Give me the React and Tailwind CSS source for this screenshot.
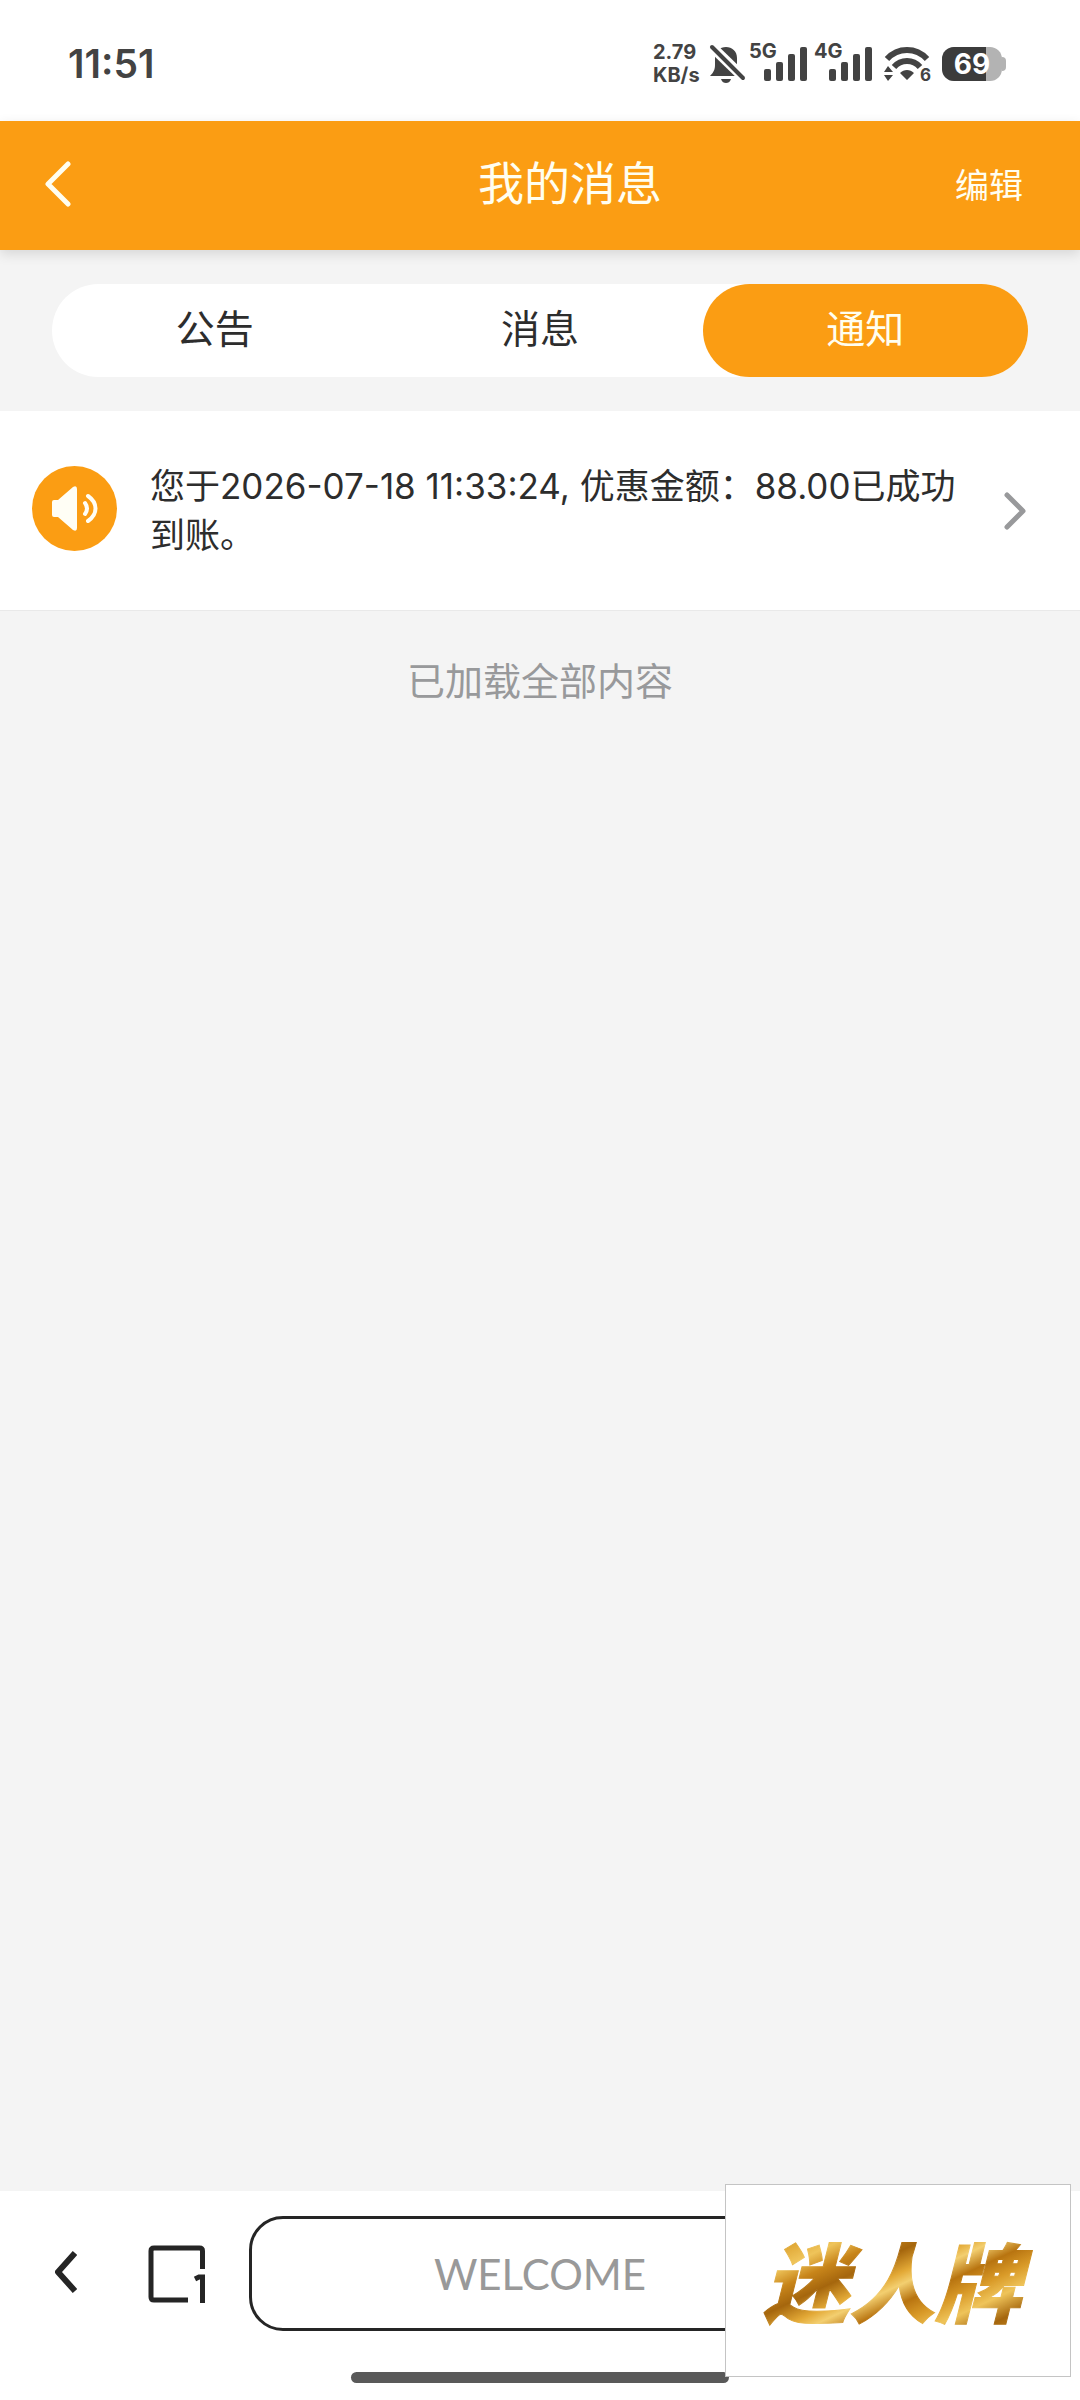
function SignalBars() {
  return (
    <svg width="43" height="34" viewBox="0 0 43 34" fill="currentColor" aria-hidden="true">
      <rect x="0" y="22" width="7" height="12" rx="2" />
      <rect x="12" y="15" width="7" height="19" rx="2" />
      <rect x="24" y="7" width="7" height="27" rx="2" />
      <rect x="36" y="0" width="7" height="34" rx="2" />
    </svg>
  );
}

function Signal({ label }) {
  return (
    <div className="relative flex w-[58px] justify-end">
      <span className="absolute -top-1 left-0 text-[20px] leading-[16px] font-bold">{label}</span>
      <SignalBars />
    </div>
  );
}

function MutedBell() {
  return (
    <svg width="37" height="40" viewBox="0 0 37 40" aria-hidden="true">
      <path fill="currentColor" d="M17 3c6 0 11 4 11 11v9l4 7v2H1c4-4 5-7 5-11v-7C6 7 11 3 17 3Z" />
      <path fill="currentColor" d="M12 35h10c-1 3-3 4-5 4s-4-1-5-4Z" />
      <path d="M0 0 37 36" stroke="#fff" strokeWidth="10" />
      <path d="M3 3 34 34" stroke="currentColor" strokeWidth="4" strokeLinecap="round" />
    </svg>
  );
}

function Wifi() {
  return (
    <div className="relative">
      <svg width="46" height="34" viewBox="0 0 46 34" aria-hidden="true">
        <g fill="none" stroke="currentColor" strokeWidth="6">
          <path d="M3 12C14 0 32 0 43 12" />
          <path d="M10 20c7-8 19-8 26 0" />
        </g>
        <path fill="currentColor" d="M16 26c4-4 10-4 14 0l-7 7ZM0 25l4-6 5 6ZM0 28h9l-5 6Z" />
      </svg>
      <span className="absolute -right-px -bottom-px text-[17px] leading-[14px] font-bold">6</span>
    </div>
  );
}

function Battery() {
  return (
    <div className="flex items-center">
      <div className="relative flex h-[34px] w-[60px] items-center justify-center overflow-hidden rounded-[12px] bg-[#b3b3b3] text-white">
        <div className="absolute inset-y-0 left-0 w-[44px] bg-[#3c3c3c]" />
        <span className="relative text-[28px] leading-none font-bold">69</span>
      </div>
      <div className="h-[14px] w-1 rounded-r bg-[#b3b3b3]" />
    </div>
  );
}

function StatusBar() {
  return (
    <div className="flex h-[121px] items-center justify-between bg-white pt-[7px] pr-[74px] pl-[68px] font-[Inter,sans-serif] text-[#434343]">
      <span className="text-[39px] font-semibold">11:51</span>
      <div className="flex items-center">
        <div className="mr-[11px] w-[45px] text-[20px] leading-[23px] font-bold">
          <div>2.79</div>
          <div>KB/s</div>
        </div>
        <MutedBell />
        <div className="ml-[3px] flex gap-[7px]">
          <Signal label="5G" />
          <Signal label="4G" />
        </div>
        <div className="mx-3">
          <Wifi />
        </div>
        <Battery />
      </div>
    </div>
  );
}

function Header() {
  return (
    <header className="z-10 grid h-[129px] grid-cols-[1fr_auto_1fr] items-center bg-[#fb9d13] pr-[57px] pb-1 pl-[45px] text-[#fffef0] shadow-[0_4px_12px_rgba(0,0,0,0.12)]">
      <button aria-label="返回" className="justify-self-start">
        <svg width="26" height="46" viewBox="0 0 26 46" fill="none" stroke="currentColor" strokeWidth="5" strokeLinecap="round" strokeLinejoin="round" aria-hidden="true">
          <path d="M23 3 3 23l20 20" />
        </svg>
      </button>
      <h1 className="pb-2 pl-[72px] text-[46px] leading-none">我的消息</h1>
      <button className="justify-self-end text-[34px] leading-none">编辑</button>
    </header>
  );
}

const TABS = ["公告", "消息", "通知"];

function Tabs() {
  return (
    <nav className="px-[52px] py-[34px]">
      <div role="tablist" className="grid h-[93px] grid-cols-3 rounded-full bg-white">
        {TABS.map((tab) => (
          <button
            key={tab}
            role="tab"
            aria-selected={tab === "通知"}
            className="rounded-full pb-2 text-[39px] leading-none text-[#2d2d2d] aria-selected:bg-[#fb9d13] aria-selected:text-[#fffef0]"
          >
            {tab}
          </button>
        ))}
      </div>
    </nav>
  );
}

function SpeakerIcon() {
  return (
    <svg className="mb-1 shrink-0" width="85" height="85" viewBox="0 0 85 85" aria-hidden="true">
      <circle cx="42.5" cy="42.5" r="42.5" fill="#fb9d13" />
      <path fill="#fffef5" d="M20 36q0-2 2-2h4L41 21q4-2 4 2v39q0 4-4 2L26 51h-4q-2 0-2-2Z" />
      <g fill="none" stroke="#fffef5" strokeWidth="4" strokeLinecap="round">
        <path d="M53 37q4 5.500 0 11" />
        <path d="M56 30c10 7 10 18 0 25" />
      </g>
    </svg>
  );
}

function MessageItem() {
  return (
    <a href="#message" className="flex h-[200px] items-center border-b border-[#e9e9e9] bg-white pr-[54px] pl-8 text-[#2d2d2d]">
      <SpeakerIcon />
      <p className="ml-[33px] flex-1 pr-12 font-[Inter,'Noto_Sans_CJK_SC',sans-serif] text-[35px] leading-[49px]">
        您于2026-07-18 11:33:24, 优惠金额：88.00已成功到账。
      </p>
      <svg width="22" height="38" viewBox="0 0 22 38" fill="none" stroke="#98999b" strokeWidth="5" strokeLinecap="round" strokeLinejoin="round" aria-hidden="true">
        <path d="m3 3 16 16L3 35" />
      </svg>
    </a>
  );
}

function BottomBar() {
  return (
    <footer className="relative h-[209px] bg-white pt-[25px]">
      <div className="flex items-center px-[55px]">
        <button aria-label="后退" className="mb-1 text-[#252525]">
          <svg width="22" height="42" viewBox="0 0 22 42" fill="none" stroke="currentColor" strokeWidth="6" strokeLinejoin="round" aria-hidden="true">
            <path d="M20 2 3 21l17 19" />
          </svg>
        </button>
        <button aria-label="标签页 1" className="ml-[71px] text-[#252525]">
          <svg width="57" height="58" viewBox="0 0 57 58" fill="none" stroke="currentColor" strokeWidth="5" aria-hidden="true">
            <path d="M54.500 24V6q0-3-3-3H6Q3 3 3 6v46q0 3 3 3h34" />
            <path d="M47 34l4-2h3.500V58" />
          </svg>
        </button>
        <input
          type="text"
          aria-label="WELCOME"
          placeholder="WELCOME"
          className="mr-[194px] ml-11 h-[115px] min-w-0 flex-1 rounded-[34px] border-3 border-[#252525] bg-white text-center font-[Lato,sans-serif] text-[42px] placeholder:text-[#999]"
        />
      </div>
      <div className="mx-auto mt-[41px] h-[11px] w-[35%] rounded-full bg-[#595959]" />
      <div className="absolute -top-[7px] right-[9px] flex h-[193px] w-[346px] items-center justify-center border border-[#c4c4c4] bg-white">
        <span className="bg-[linear-gradient(155deg,#a8690c_0%,#dca02c_12%,#efc45a_22%,#c8851a_30%,#a5660d_38%,#e3a936_47%,#f3cf70_52%,#b87410_60%,#d99a28_68%,#efc45a_76%,#a5660d_86%,#dca02c_100%)] bg-clip-text pr-3 pb-1 text-[86px] leading-[110px] font-black text-transparent italic [-webkit-text-stroke:1px_transparent]">
          迷人牌
        </span>
      </div>
    </footer>
  );
}

export default function App() {
  return (
    <div className="flex min-h-screen flex-col bg-[#f4f4f4] font-['Noto_Sans_CJK_SC',sans-serif]">
      <StatusBar />
      <Header />
      <Tabs />
      <main className="flex-1">
        <MessageItem />
        <p className="pt-[43px] text-center text-[38px] leading-[50px] text-[#98999b]">已加载全部内容</p>
      </main>
      <BottomBar />
    </div>
  );
}
